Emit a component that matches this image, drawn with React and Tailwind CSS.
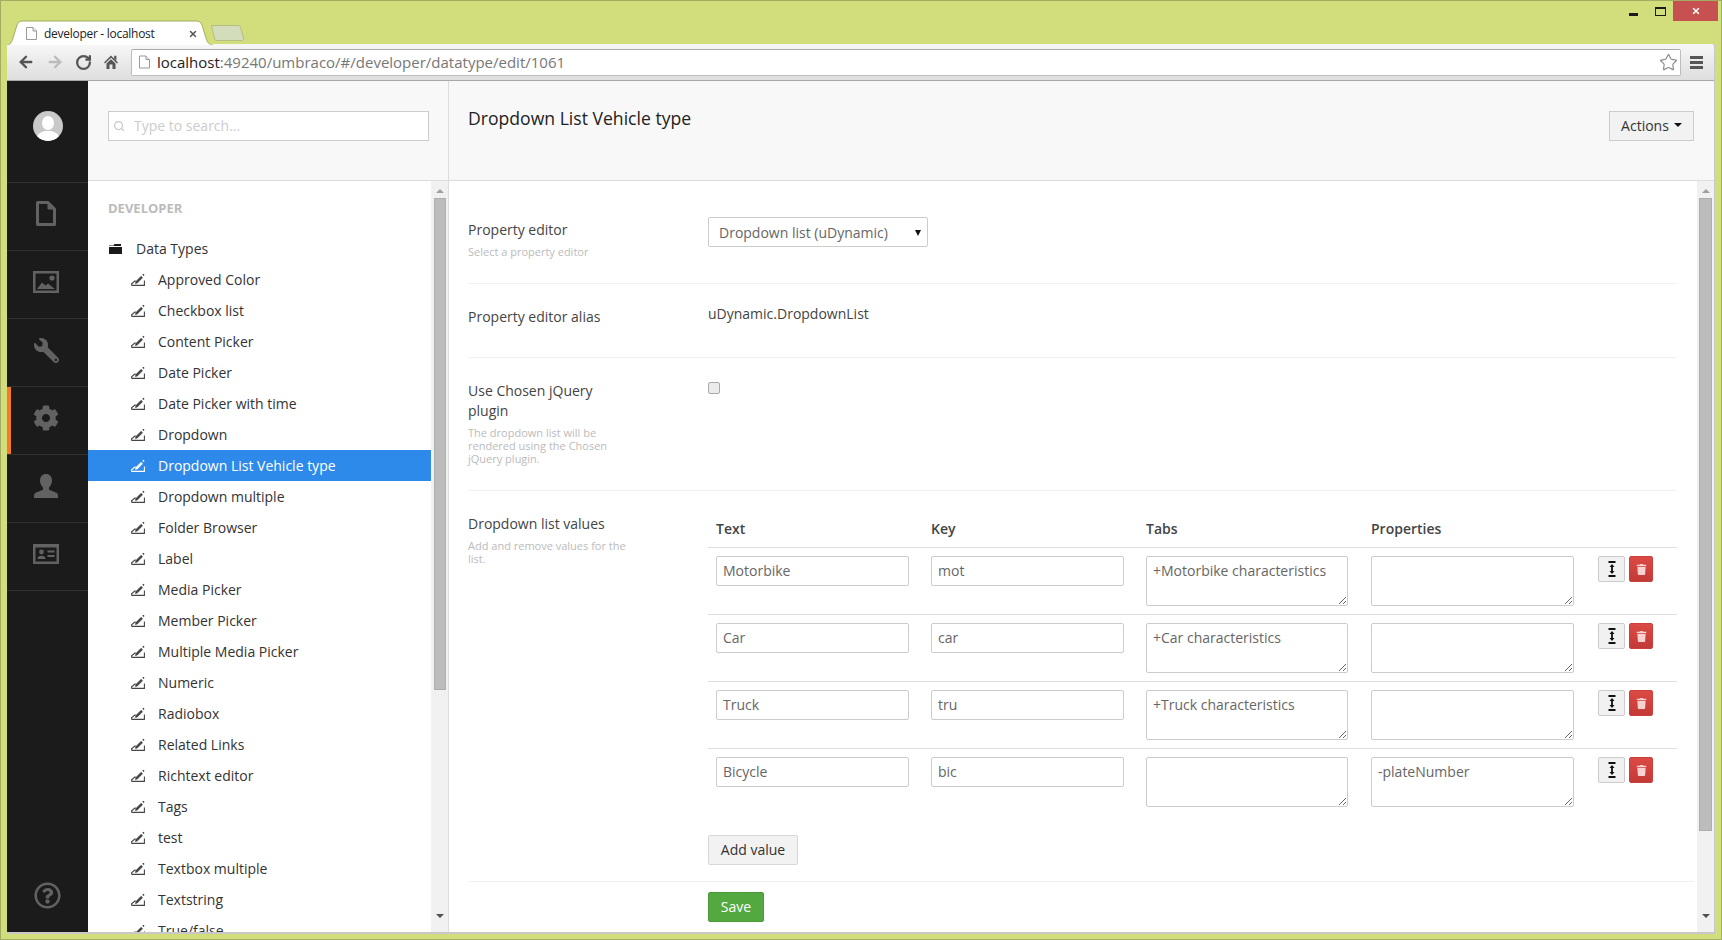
import React from "react";
import { FaWrench, FaCog, FaRegQuestionCircle, FaTrash } from "react-icons/fa";
import { Search, Star, RotateCw, ArrowLeft, ArrowRight, X } from "lucide-react";

const treeItems = ["Approved Color","Checkbox list","Content Picker","Date Picker","Date Picker with time","Dropdown","Dropdown List Vehicle type","Dropdown multiple","Folder Browser","Label","Media Picker","Member Picker","Multiple Media Picker","Numeric","Radiobox","Related Links","Richtext editor","Tags","test","Textbox multiple","Textstring","True/false"];
const rows = [
  ["Motorbike","mot","+Motorbike characteristics",""],
  ["Car","car","+Car characteristics",""],
  ["Truck","tru","+Truck characteristics",""],
  ["Bicycle","bic","","-plateNumber"],
];

function PageIcon({ className }) {
  return (
    <svg viewBox="0 0 11 13" className={className} fill="#fff" stroke="#9a9a9a" strokeWidth="1">
      <path d="M.5.5h6.5l3.500 3.500v8.500H.5z" />
      <path d="M7 .5V4h3.500" fill="#eee" />
    </svg>
  );
}

function TreeIcon({ active }) {
  const c = active ? "#ffffff" : "#444444";
  return (
    <svg viewBox="0 0 14 13" className="w-[14px] h-[13px] shrink-0" fill="none" stroke={c}>
      <path d="M.6 12.400h12.800V7.500M.6 12.400v-1.600l3.200-2.800h1" strokeWidth="1.100" />
      <path d="M4.500 10.500l1.800-.5 5.200-5.300-1.400-1.400-5.200 5.300z" fill={c} strokeWidth="0.700" />
      <path d="M11.800 1.300l1.200 1.200" strokeWidth="1.600" />
    </svg>
  );
}

function HomeIcon() {
  return (
    <svg viewBox="0 0 14 14" className="w-[14px] h-[14px] ml-[12px]" fill="#555555">
      <path d="M7 .5 L14 7.500 L13 8.500 L7 2.800 L1 8.500 L0 7.500z" />
      <path d="M10.200 .8h2.200v5l-2.200-2.200z" />
      <path d="M2.500 8.500 L7 4.200 L11.500 8.500V14H8.500V9.500H5.500V14H2.500z" />
    </svg>
  );
}

function FileNav() {
  return (
    <svg viewBox="0 0 20 25" className="w-[20px] h-[25px]" fill="none" stroke="#626262" strokeWidth="3" strokeLinejoin="round">
      <path d="M1.500 1.500h10.500l6.500 6.500v15.500h-17z" />
      <path d="M12 1.500l6.500 6.500H12z" fill="#626262" strokeWidth="1" />
    </svg>
  );
}
function ImageNav() {
  return (
    <svg viewBox="0 0 26 22" className="w-[26px] h-[22px]" fill="#626262">
      <rect x="1.250" y="1.250" width="23.500" height="19.500" fill="none" stroke="#626262" strokeWidth="2.500" />
      <circle cx="19" cy="7" r="2.600" />
      <path d="M4 18l5-6.500 3.500 3 2.500-2 7 5.500z" />
    </svg>
  );
}
function UserNav() {
  return (
    <svg viewBox="0 0 24 24" className="w-[24px] h-[24px]" fill="#626262">
      <path d="M12 0c3.600 0 6 2.700 6 6.500 0 3-1.400 5.600-3 7v2.200l6.200 2.600c1.800.8 2.800 1.600 2.800 3.200V24H0v-2.500c0-1.600 1-2.400 2.800-3.200L9 15.700v-2.200c-1.600-1.400-3-4-3-7C6 2.700 8.400 0 12 0z" />
    </svg>
  );
}
function CardNav() {
  return (
    <svg viewBox="0 0 26 20" className="w-[26px] h-[20px]" fill="#626262">
      <path d="M0 0h26v20H0zM2.500 3.500V17.500h21V3.500z" fillRule="evenodd" />
      <circle cx="8.500" cy="8" r="2.400" />
      <path d="M4.500 15c0-2.200 1.600-3.200 4-3.200s4 1 4 3.200z" />
      <rect x="14.500" y="6.500" width="7" height="2" />
      <rect x="14.500" y="11" width="7" height="2" />
    </svg>
  );
}

function NavCell({ children, active }) {
  return (
    <div className="h-[68px] border-t border-[#303030] flex">
      <div className={active ? "w-[4px] h-[67px] bg-[#f47a26] shrink-0" : "w-[4px] shrink-0"} />
      <div className="w-[70px] flex items-center justify-center pb-[6px]">{children}</div>
    </div>
  );
}

function Sidebar() {
  return (
    <div className="w-[81px] shrink-0 bg-[#1b1b1b] flex flex-col">
      <div className="h-[101px] flex pl-[26px] pt-[30px]">
        <div className="w-[30px] h-[30px] rounded-full bg-[#c9c9c9] overflow-hidden">
          <svg viewBox="0 0 30 30" className="w-[30px] h-[30px]" fill="#fff">
            <ellipse cx="15" cy="12" rx="6" ry="7" />
            <path d="M3 30c0-7 5-9 9-10h6c4 1 9 3 9 10z" />
          </svg>
        </div>
      </div>
      <NavCell><FileNav /></NavCell>
      <NavCell><ImageNav /></NavCell>
      <NavCell><FaWrench className="text-[25px] text-[#626262] -scale-x-100 mt-[2px]" /></NavCell>
      <NavCell active><FaCog className="text-[26px] text-[#626262] mt-[1px]" /></NavCell>
      <NavCell><UserNav /></NavCell>
      <NavCell><CardNav /></NavCell>
      <div className="flex-1 border-t border-[#303030] flex items-end pb-[23px] pl-[27px]">
        <FaRegQuestionCircle className="text-[27px] text-[#626262]" />
      </div>
    </div>
  );
}

function TreeScroll() {
  return (
    <div className="w-[17px] shrink-0 bg-[#f1f1f1] flex flex-col items-center">
      <div className="h-[17px] flex items-center justify-center pt-[2px]">
        <div className="w-0 h-0 border-l-[4px] border-r-[4px] border-b-[4px] border-l-transparent border-r-transparent border-b-[#a0a0a0]" />
      </div>
      <div className="w-[12px] h-[492px] bg-[#bcbcbc] border border-[#aeaeae]" />
      <div className="flex-1" />
      <div className="h-[20px] flex items-start justify-center pt-[2px]">
        <div className="w-0 h-0 border-l-[4px] border-r-[4px] border-t-[4px] border-l-transparent border-r-transparent border-t-[#505050]" />
      </div>
    </div>
  );
}

function Tree() {
  return (
    <div className="w-[361px] shrink-0 flex flex-col border-r border-[#dcdcdc] bg-white">
      <div className="h-[100px] shrink-0 bg-[#f8f8f8] border-b border-[#dcdcdc] pl-[20px] pt-[30px]">
        <div className="relative w-[321px]">
          <Search className="absolute left-[5px] top-[9px] w-[12px] h-[12px] text-[#c8c8c8]" strokeWidth={2.5} />
          <input readOnly placeholder="Type to search..." className="w-[321px] h-[30px] bg-white border border-[#cccccc] pl-[25px] pb-[2px] text-[14px] outline-none placeholder:text-[#cccccc]" />
        </div>
      </div>
      <div className="flex flex-1 min-h-0">
        <div className="flex-1 min-w-0 overflow-hidden">
          <div className="pl-[20px] pt-[18px] h-[52px] text-[13px] font-bold text-[#bbbbbb] leading-[18px]">DEVELOPER</div>
          <div className="h-[31px] flex items-center pl-[21px] text-[14px] text-[#333333]">
            <svg viewBox="0 0 13 10" className="w-[13px] h-[10px] mr-[14px] shrink-0" fill="#1a1a1a"><path d="M0 1.500h4.500l1-1.500H12v2H0zM0 3h13v7H0z" /></svg>
            Data Types
          </div>
          {treeItems.map((t, i) => {
            const active = i === 6;
            return (
              <div key={t} className={"h-[31px] flex items-center pl-[43px] text-[14px] " + (active ? "bg-[#2e8aea] text-white" : "text-[#333333]")}>
                <TreeIcon active={active} />
                <span className="ml-[13px] whitespace-nowrap">{t}</span>
              </div>
            );
          })}
        </div>
        <TreeScroll />
      </div>
    </div>
  );
}

function Label({ title, desc }) {
  return (
    <div className="w-[240px] shrink-0">
      <div className="w-[162px]">
        <div className="text-[14px] leading-[20px] text-[#444444]">{title}</div>
        {desc && <div className="text-[11px] leading-[13px] text-[#bbbbbb] mt-[5px]">{desc}</div>}
      </div>
    </div>
  );
}

function MoveIcon() {
  return (
    <svg viewBox="0 0 8 16" className="w-[8px] h-[16px]" fill="#111">
      <rect x="0.500" y="0" width="7" height="2" />
      <rect x="0.500" y="14" width="7" height="2" />
      <path d="M4 3l2.500 3H4.900v4h1.600L4 13l-2.500-3h1.600V6H1.500z" />
    </svg>
  );
}

const fieldClass = "bg-white border border-[#cccccc] rounded-[2px] text-[14px] text-[#666666] outline-none";

function ValueRow({ r }) {
  return (
    <div className="h-[67px] border-t border-[#dedede] pt-[8px] pl-[8px] grid grid-cols-[215px_215px_225px_227px_auto] items-start">
      <input readOnly value={r[0]} className={fieldClass + " w-[193px] h-[30px] px-[6px] pb-[2px]"} />
      <input readOnly value={r[1]} className={fieldClass + " w-[193px] h-[30px] px-[6px] pb-[2px]"} />
      <textarea readOnly value={r[2]} className={fieldClass + " w-[202px] h-[50px] px-[6px] py-[4px] leading-[20px] resize block"} />
      <textarea readOnly value={r[3]} className={fieldClass + " w-[203px] h-[50px] px-[6px] py-[4px] leading-[20px] resize block"} />
      <div className="flex gap-[4px]">
        <div className="w-[27px] h-[26px] bg-[#f1f1f1] border border-[#cccccc] rounded-[2px] flex items-center justify-center"><MoveIcon /></div>
        <div className="w-[24px] h-[26px] bg-gradient-to-b from-[#dc4a45] to-[#c23a36] border border-[#c9403c] rounded-[2px] flex items-center justify-center">
          <FaTrash className="text-[11px] text-[#f8d2d0]" />
        </div>
      </div>
    </div>
  );
}

function Content() {
  return (
    <div className="flex-1 min-w-0 flex flex-col bg-white">
      <div className="h-[100px] shrink-0 bg-[#f8f8f8] border-b border-[#dcdcdc] pl-[19px] pr-[20px] flex justify-between items-start">
        <h1 className="text-[17.6px] leading-[24px] text-[#222222] mt-[25px]">Dropdown List Vehicle type</h1>
        <button className="mt-[30px] w-[85px] h-[30px] pb-[2px] bg-[#f2f2f2] border border-[#cccccc] text-[14px] text-[#333333] flex items-center justify-center gap-[5px]">
          Actions
          <span className="w-0 h-0 border-l-[4px] border-r-[4px] border-t-[4px] border-l-transparent border-r-transparent border-t-[#111111]" />
        </button>
      </div>
      <div className="flex flex-1 min-h-0">
        <div className="flex-1 min-w-0 pl-[19px]">
          <div className="w-[1209px] h-[103px] border-b border-[#f1f1f1] flex">
            <div className="pt-[39px]"><Label title="Property editor" desc="Select a property editor" /></div>
            <div className="pt-[36px]">
              <div className="relative w-[220px]">
                <select className="appearance-none w-[220px] h-[30px] bg-white border border-[#cccccc] rounded-[2px] pl-[10px] text-[14px] text-[#666666] outline-none">
                  <option>Dropdown list (uDynamic)</option>
                </select>
                <span className="absolute right-[7px] top-[13px] w-0 h-0 border-l-[3px] border-r-[3px] border-t-[6px] border-l-transparent border-r-transparent border-t-[#111111]" />
              </div>
            </div>
          </div>
          <div className="w-[1209px] h-[74px] border-b border-[#f1f1f1] flex">
            <div className="pt-[23px]"><Label title="Property editor alias" /></div>
            <div className="pt-[20px] text-[14px] leading-[20px] text-[#444444]">uDynamic.DropdownList</div>
          </div>
          <div className="w-[1209px] h-[133px] border-b border-[#f1f1f1] flex">
            <div className="pt-[23px]"><Label title="Use Chosen jQuery plugin" desc="The dropdown list will be rendered using the Chosen jQuery plugin." /></div>
            <div className="pt-[24px]">
              <input type="checkbox" className="appearance-none block w-[12px] h-[12px] bg-[#ebebeb] border border-[#aaaaaa] rounded-[2px]" />
            </div>
          </div>
          <div className="w-[1226px] h-[391px] border-b border-[#f1f1f1] flex">
            <div className="pt-[23px]"><Label title="Dropdown list values" desc="Add and remove values for the list." /></div>
            <div className="w-[969px]">
              <div className="pt-[28px] h-[56px] pl-[8px] grid grid-cols-[215px_215px_225px_227px_auto] text-[14px] leading-[20px] font-semibold text-[#444444]">
                <div>Text</div><div>Key</div><div>Tabs</div><div>Properties</div>
              </div>
              {rows.map((r) => <ValueRow key={r[0]} r={r} />)}
              <button className="mt-[20px] w-[90px] h-[30px] pb-[2px] bg-[#f2f2f2] border border-[#d8d8d8] rounded-[2px] text-[14px] text-[#333333]">Add value</button>
            </div>
          </div>
          <div className="pl-[240px] pt-[10px]">
            <button className="w-[56px] h-[30px] pb-[2px] bg-[#53a93f] border border-[#4a9a38] rounded-[2px] text-[14px] text-white">Save</button>
          </div>
        </div>
        <div className="w-[17px] shrink-0 bg-[#f1f1f1] flex flex-col items-center">
          <div className="h-[17px] flex items-center justify-center pt-[2px]">
            <div className="w-0 h-0 border-l-[4px] border-r-[4px] border-b-[4px] border-l-transparent border-r-transparent border-b-[#a0a0a0]" />
          </div>
          <div className="w-[13px] h-[633px] bg-[#bcbcbc] border border-[#aeaeae]" />
          <div className="flex-1" />
          <div className="h-[20px] flex items-start justify-center pt-[2px]">
            <div className="w-0 h-0 border-l-[4px] border-r-[4px] border-t-[4px] border-l-transparent border-r-transparent border-t-[#505050]" />
          </div>
        </div>
      </div>
    </div>
  );
}

function TabStrip() {
  return (
    <div className="h-[43px] shrink-0 flex items-start relative">
      <div className="relative w-[207px] h-[25px] mt-[19px] ml-[5px] shrink-0 z-10">
        <svg viewBox="0 0 207 25" className="absolute inset-0 w-[207px] h-[25px]">
          <path d="M1 25 C5 25 6 21 7 18 L11 5 C12 2 14 1 17 1 L190 1 C193 1 195 2 196 5 L200 18 C201 22 203 25 207 25" fill="#ffffff" stroke="#a3ad62" strokeWidth="1" />
        </svg>
        <div className="relative flex items-center h-[25px] pl-[20px] pt-[2px]">
          <PageIcon className="w-[11px] h-[13px] shrink-0" />
          <span className="ml-[7px] text-[12px] text-[#222222] tracking-[-0.28px] whitespace-nowrap">developer - localhost</span>
          <X className="absolute left-[182px] top-[9px] w-[10px] h-[10px] text-[#555555]" strokeWidth={3.5} />
        </div>
      </div>
      <svg viewBox="0 0 33 16" className="w-[33px] h-[16px] mt-[24px] -ml-[2px] shrink-0">
        <path d="M.5 .5H27c1.500 0 2 .5 2.500 2L32.500 13c.3 1.500-.5 2.500-2 2.500H6c-1.500 0-2-.5-2.500-2z" fill="#d4ddbb" stroke="#b4bd85" />
      </svg>
      <div className="ml-auto flex items-start mr-[3px]">
        <div className="w-[9px] h-[3px] bg-[#1a1a1a] mt-[12px] mr-[17px]" />
        <div className="w-[11px] h-[9px] border border-[#1a1a1a] border-t-2 mt-[6px] mr-[7px]" />
        <div className="w-[45px] h-[20px] bg-[#c75050] flex items-center justify-center">
          <X className="w-[10px] h-[10px] text-white" strokeWidth={3.5} />
        </div>
      </div>
    </div>
  );
}

function Toolbar() {
  return (
    <div className="h-[37px] shrink-0 bg-gradient-to-b from-[#f7f7f7] to-[#dedede] border-b border-[#a8a8a8] rounded-tr-[3px] flex items-center pl-[10px] pr-[11px]">
      <ArrowLeft className="w-[18px] h-[18px] text-[#555555]" strokeWidth={3.2} />
      <ArrowRight className="w-[18px] h-[18px] ml-[11px] text-[#bcbcbc]" strokeWidth={3.2} />
      <RotateCw className="w-[17px] h-[17px] ml-[11px] text-[#555555]" strokeWidth={3.2} />
      <HomeIcon />
      <div className="ml-[13px] flex-1 min-w-0 h-[27px] bg-white border border-[#bdbdbd] border-t-[#a8a8a8] rounded-[2px] flex items-center pl-[7px] pr-[2px]">
        <PageIcon className="w-[11px] h-[14px] shrink-0" />
        <div className="ml-[7px] text-[15px] whitespace-nowrap">
          <span className="text-[#222222]">localhost</span><span className="text-[#777777]">:49240/umbraco/#/developer/datatype/edit/1061</span>
        </div>
        <Star className="ml-auto w-[19px] h-[19px] text-[#8c8c8c]" strokeWidth={1.5} />
      </div>
      <div className="ml-[9px] w-[13px] flex flex-col gap-[2px]">
        <div className="h-[3px] bg-[#555555]" /><div className="h-[3px] bg-[#555555]" /><div className="h-[3px] bg-[#555555]" />
      </div>
    </div>
  );
}

export default function App() {
  return (
    <div className="w-[1722px] h-[940px] overflow-hidden bg-[#d2de7b] border border-[#a3ad62] flex flex-col font-['Open_Sans',sans-serif]">
      <TabStrip />
      <div className="mx-[6px] flex flex-col border-r border-b-2 border-[#c8c8c8]">
        <Toolbar />
        <div className="h-[851px] flex">
          <Sidebar />
          <Tree />
          <Content />
        </div>
      </div>
    </div>
  );
}
